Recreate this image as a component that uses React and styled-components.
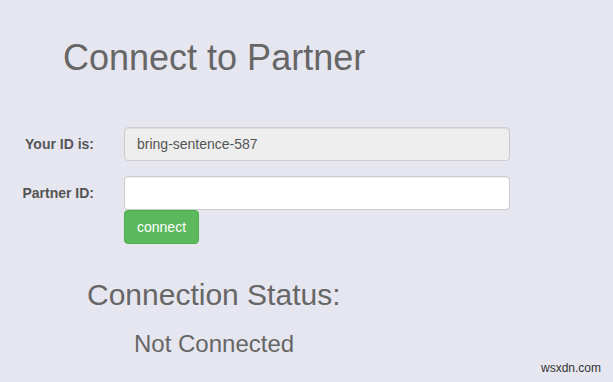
import React from "react";
import styled, { createGlobalStyle } from "styled-components";

const Global = createGlobalStyle`
  html, body { margin: 0; padding: 0; background: #e6e6f0; }
  body { font-family: "Liberation Sans", Arial, sans-serif; width: 613px; height: 382px; overflow: hidden; }
  * { box-sizing: border-box; }
`;

const Page = styled.div`
  position: relative;
  width: 613px;
  height: 382px;
  padding-top: 38px;
  background: #e6e6f0;
  color: #666;
`;

const Title = styled.h1`
  margin: 0 0 0 63px;
  font-size: 36px;
  line-height: 40px;
  font-weight: 400;
  color: #666;
`;

const Form = styled.form`
  margin-top: 49px;
  display: flex;
  flex-direction: column;
`;

const Row = styled.div`
  display: flex;
  align-items: center;
  margin-bottom: ${(p) => p.$gap || 0}px;
`;

const Label = styled.label`
  width: 94px;
  margin-right: 30px;
  text-align: right;
  font-size: 14px;
  font-weight: 700;
  color: #555;
`;

const Input = styled.input`
  width: 386px;
  height: 34px;
  padding: 6px 12px;
  border: 1px solid #ccc;
  border-radius: 4px;
  font-family: inherit;
  font-size: 14px;
  color: #555;
  background: ${(p) => (p.readOnly ? "#eee" : "#fff")};
  box-shadow: inset 0 1px 1px rgba(0, 0, 0, 0.075);
  outline: none;
`;

const ButtonRow = styled.div`
  padding-left: 124px;
`;

const Button = styled.button`
  height: 34px;
  padding: 6px 12px;
  border: 1px solid #4cae4c;
  border-radius: 4px;
  background: #5cb85c;
  color: #fff;
  font-family: inherit;
  font-size: 14px;
  line-height: 20px;
  cursor: pointer;
`;

const StatusTitle = styled.h2`
  margin: 34px 0 0 87px;
  font-size: 30px;
  line-height: 33px;
  font-weight: 400;
  color: #666;
`;

const StatusText = styled.div`
  margin: 20px 0 0 134px;
  font-size: 24px;
  line-height: 26px;
  color: #666;
`;

const Watermark = styled.div`
  position: absolute;
  right: 12px;
  bottom: 7px;
  font-size: 12px;
  color: #333;
`;

export default function App() {
  return (
    <>
      <Global />
      <Page>
        <Title>Connect to Partner</Title>
        <Form onSubmit={(e) => e.preventDefault()}>
          <Row $gap={15}>
            <Label>Your ID is:</Label>
            <Input readOnly value="bring-sentence-587" />
          </Row>
          <Row>
            <Label>Partner ID:</Label>
            <Input defaultValue="" />
          </Row>
          <ButtonRow>
            <Button type="submit">connect</Button>
          </ButtonRow>
        </Form>
        <StatusTitle>Connection Status:</StatusTitle>
        <StatusText>Not Connected</StatusText>
        <Watermark>wsxdn.com</Watermark>
      </Page>
    </>
  );
}
